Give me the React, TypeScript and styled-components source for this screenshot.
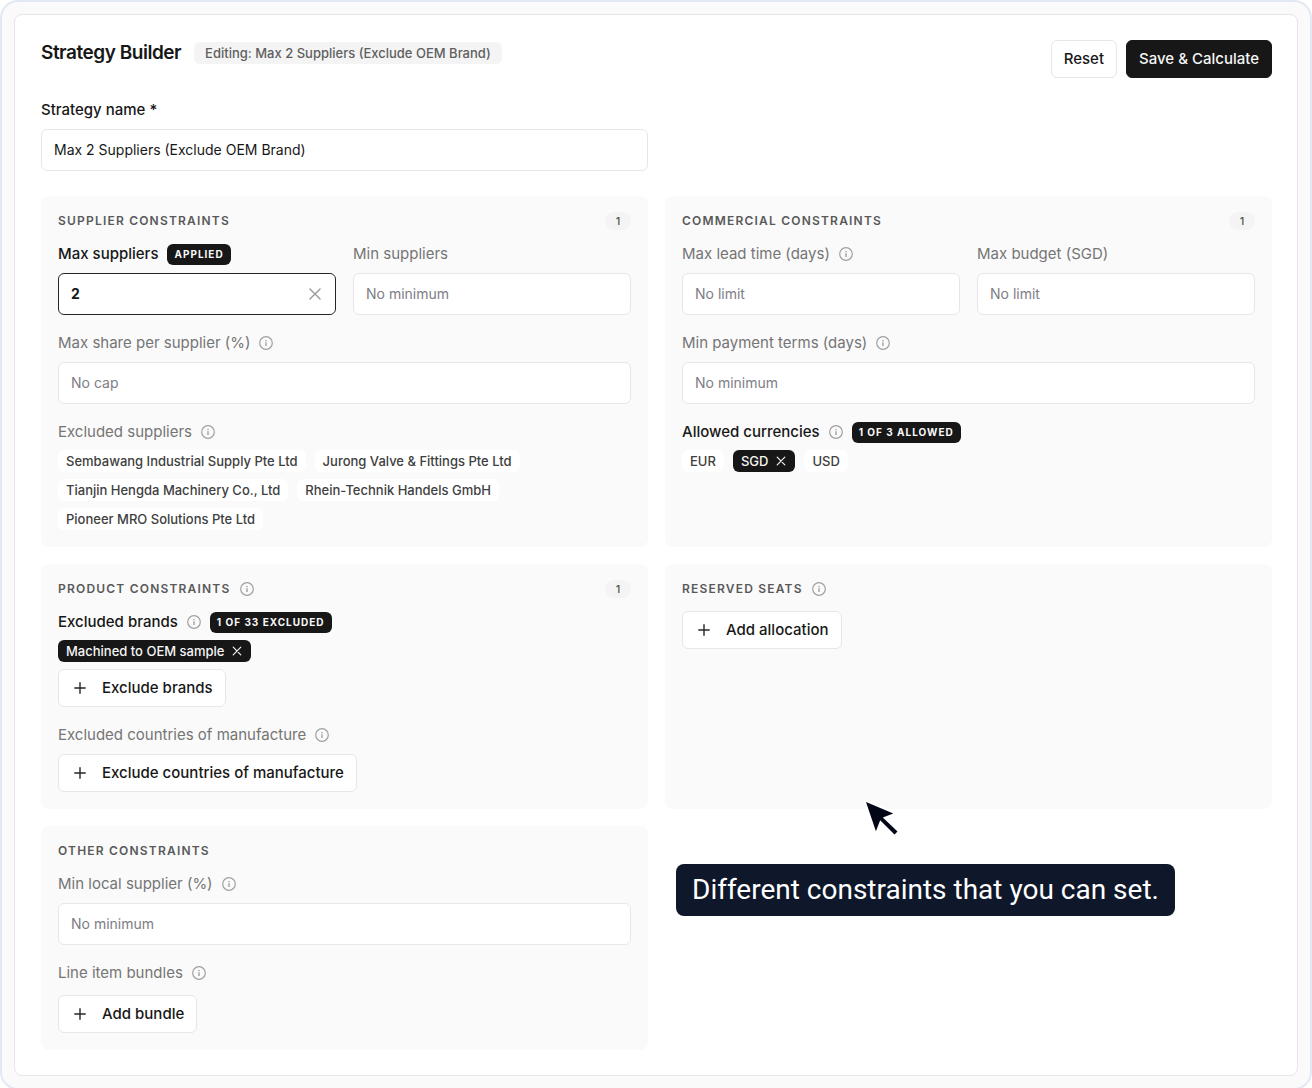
import React, { useState } from "react";
import styled, { createGlobalStyle, css } from "styled-components";

const color = {
  ink: "#171717",
  heading: "#595959",
  muted: "#757575",
  placeholder: "#7d7d85",
  line: "#e7e7e7",
  surface: "#fafafa",
  icon: "#a0a0a0",
};

const GlobalStyle = createGlobalStyle`
  *, *::before, *::after { box-sizing: border-box; }
  body {
    margin: 0;
    background: #ffffff;
    color: ${color.ink};
    font-family: Inter, "Liberation Sans", sans-serif;
    font-size: 15px;
    line-height: 22px;
  }
  button, input { font: inherit; color: inherit; }
`;

const Frame = styled.div`
  padding: 12px;
  border: 2px solid #e2e8f4;
  border-radius: 18px;
  background: ${color.surface};
`;

const Card = styled.main`
  padding: 25px 25px 25px 26px;
  border: 1px solid ${color.line};
  border-radius: 8px;
  background: #ffffff;
`;

const Header = styled.header`
  display: flex;
  justify-content: space-between;
  align-items: flex-start;
  margin-bottom: 21px;
`;

const TitleGroup = styled.div`
  display: flex;
  align-items: center;
  gap: 13px;
`;

const Title = styled.h1`
  margin: 0;
  font-size: 19px;
  line-height: 26px;
  font-weight: 600;
  letter-spacing: -0.025em;
`;

const EditingTag = styled.span`
  padding: 0 11px;
  border-radius: 6px;
  background: #f4f4f4;
  color: #5f5f5f;
  font-size: 13px;
  line-height: 22px;
  font-weight: 500;
`;

const Actions = styled.div`
  display: flex;
  gap: 9px;
`;

const Button = styled.button<{ $primary?: boolean }>`
  display: inline-flex;
  align-items: center;
  align-self: flex-start;
  gap: 13px;
  height: 38px;
  padding: 0 12px;
  border: 1px solid ${(p) => (p.$primary ? color.ink : color.line)};
  border-radius: 6px;
  background: ${(p) => (p.$primary ? color.ink : "#ffffff")};
  color: ${(p) => (p.$primary ? "#f5f5f5" : color.ink)};
  font-weight: 500;
  cursor: pointer;
`;

const Columns = styled.div`
  display: grid;
  grid-template-columns: 1fr 1fr;
  gap: 17px;
`;

const NameRow = styled(Columns)`
  margin-bottom: 25px;
`;

const Panel = styled.section`
  display: flex;
  flex-direction: column;
  gap: 13px;
  padding: 16px 17px 17px;
  border-radius: 8px;
  background: ${color.surface};
`;

const PanelHead = styled.div`
  display: flex;
  align-items: center;
  gap: 9px;
  height: 18px;
`;

const PanelTitle = styled.h2`
  margin: 0;
  color: ${color.heading};
  font-size: 12px;
  line-height: 18px;
  font-weight: 600;
  letter-spacing: 0.1em;
  text-transform: uppercase;
`;

const Count = styled.span`
  width: 26px;
  margin-left: auto;
  border-radius: 9px;
  background: #f4f4f4;
  color: #525252;
  font-size: 11px;
  line-height: 18px;
  font-weight: 500;
  text-align: center;
`;

const PanelBody = styled.div`
  display: flex;
  flex-direction: column;
  gap: 17px;
`;

const FieldBox = styled.div<{ $gap?: number }>`
  display: flex;
  flex-direction: column;
  gap: ${(p) => p.$gap ?? 8}px;
  min-width: 0;
`;

const LabelRow = styled.div`
  display: flex;
  align-items: center;
  gap: 9px;
  height: 22px;
`;

const labelText = css<{ $active?: boolean }>`
  color: ${(p) => (p.$active ? color.ink : color.muted)};
  font-weight: ${(p) => (p.$active ? 500 : 400)};
`;

const Label = styled.label<{ $active?: boolean }>`
  ${labelText}
`;

const GroupLabel = styled.span<{ $active?: boolean }>`
  ${labelText}
`;

const Badge = styled.span`
  padding: 0 7px;
  border-radius: 6px;
  background: ${color.ink};
  color: #fafafa;
  font-size: 10px;
  line-height: 21px;
  font-weight: 700;
  letter-spacing: 0.1em;
  text-transform: uppercase;
`;

const InputBox = styled.div<{ $active?: boolean }>`
  display: flex;
  align-items: center;
  height: 42px;
  padding: 0 12px;
  border: 1px solid ${(p) => (p.$active ? "#262626" : color.line)};
  border-radius: 6px;
  background: #ffffff;
  font-size: 14px;
  font-weight: ${(p) => (p.$active ? 700 : 400)};
`;

const Input = styled.input`
  flex: 1;
  min-width: 0;
  padding: 0;
  border: 0;
  outline: 0;
  background: transparent;
  &::placeholder { color: ${color.placeholder}; opacity: 1; }
`;

const ClearButton = styled.button`
  display: flex;
  padding: 0;
  border: 0;
  background: transparent;
  color: #999999;
  cursor: pointer;
`;

const Chips = styled.div`
  display: flex;
  flex-wrap: wrap;
  gap: 7px 9px;
`;

const Chip = styled.button<{ $on?: boolean }>`
  display: inline-flex;
  align-items: center;
  gap: 7px;
  height: 22px;
  padding: 0 8px;
  border: 0;
  border-radius: 6px;
  background: ${(p) => (p.$on ? color.ink : "#ffffff")};
  color: ${(p) => (p.$on ? "#f5f5f5" : "#404040")};
  font-size: 13px;
  line-height: 22px;
  font-weight: 500;
  cursor: pointer;
`;

const Annotation = styled.aside`
  position: relative;
  padding: 38px 11px;
`;

const Callout = styled.p`
  width: fit-content;
  margin: 0;
  padding: 0 16px;
  border-radius: 8px;
  background: #0f172a;
  color: #ffffff;
  font-family: Roboto, sans-serif;
  font-size: 28px;
  line-height: 52px;
`;

const Pointer = styled.svg`
  position: absolute;
  top: -28px;
  left: 197px;
`;

function InfoIcon() {
  return (
    <svg width="14" height="14" viewBox="0 0 14 14" fill="none" stroke={color.icon} aria-hidden="true">
      <circle cx="7" cy="7" r="6.3" strokeWidth="1.2" />
      <path d="M7 6.3v3.6" strokeWidth="1.4" />
      <path d="M7 3.9v1.3" strokeWidth="1.4" />
    </svg>
  );
}

function CrossIcon({ size, weight = 1 }: { size: number; weight?: number }) {
  return (
    <svg width={size} height={size} viewBox="0 0 12 12" fill="none" stroke="currentColor" strokeWidth={weight} strokeLinecap="round" aria-hidden="true">
      <path d="M2.2 2.2l7.6 7.6M9.8 2.2L2.2 9.8" />
    </svg>
  );
}

function PlusIcon() {
  return (
    <svg width="18" height="16" viewBox="0 0 18 16" fill="none" stroke="#262626" strokeWidth="1.4" strokeLinecap="round" aria-hidden="true">
      <path d="M9 2.8v10.4M3.8 8h10.4" />
    </svg>
  );
}

interface FieldProps {
  id: string;
  label: string;
  placeholder?: string;
  initial?: string;
  info?: boolean;
  clearable?: boolean;
}

function Field({ id, label, placeholder, initial = "", info, clearable }: FieldProps) {
  const [value, setValue] = useState(initial);
  const applied = Boolean(clearable && value);
  return (
    <FieldBox>
      <LabelRow>
        <Label htmlFor={id} $active={applied}>{label}</Label>
        {info && <InfoIcon />}
        {applied && <Badge>Applied</Badge>}
      </LabelRow>
      <InputBox $active={applied}>
        <Input id={id} value={value} placeholder={placeholder} onChange={(e) => setValue(e.target.value)} />
        {applied && (
          <ClearButton type="button" aria-label={"Clear " + label} onClick={() => setValue("")}>
            <CrossIcon size={16} />
          </ClearButton>
        )}
      </InputBox>
    </FieldBox>
  );
}

interface GroupProps {
  label: string;
  badge?: string;
  gap?: number;
  children: React.ReactNode;
}

function Group({ label, badge, gap = 7, children }: GroupProps) {
  return (
    <FieldBox $gap={gap} role="group" aria-label={label}>
      <LabelRow>
        <GroupLabel $active={Boolean(badge)}>{label}</GroupLabel>
        <InfoIcon />
        {badge && <Badge>{badge}</Badge>}
      </LabelRow>
      {children}
    </FieldBox>
  );
}

interface SectionProps {
  title: string;
  info?: boolean;
  count?: number;
  children: React.ReactNode;
}

function Section({ title, info, count, children }: SectionProps) {
  return (
    <Panel>
      <PanelHead>
        <PanelTitle>{title}</PanelTitle>
        {info && <InfoIcon />}
        {count !== undefined && <Count>{count}</Count>}
      </PanelHead>
      <PanelBody>{children}</PanelBody>
    </Panel>
  );
}

function AddButton({ children }: { children: React.ReactNode }) {
  return (
    <Button type="button">
      <PlusIcon />
      {children}
    </Button>
  );
}

function ChipList({ items, selected = [] }: { items: string[]; selected?: string[] }) {
  return (
    <Chips>
      {items.map((item) => {
        const on = selected.includes(item);
        return (
          <Chip key={item} type="button" $on={on} aria-pressed={on}>
            {item}
            {on && <CrossIcon size={12} weight={1.2} />}
          </Chip>
        );
      })}
    </Chips>
  );
}

const suppliers = [
  "Sembawang Industrial Supply Pte Ltd",
  "Jurong Valve & Fittings Pte Ltd",
  "Tianjin Hengda Machinery Co., Ltd",
  "Rhein-Technik Handels GmbH",
  "Pioneer MRO Solutions Pte Ltd",
];

export default function App() {
  const [name, setName] = useState("Max 2 Suppliers (Exclude OEM Brand)");
  return (
    <>
      <GlobalStyle />
      <Frame>
        <Card>
          <Header>
            <TitleGroup>
              <Title>Strategy Builder</Title>
              <EditingTag>Editing: Max 2 Suppliers (Exclude OEM Brand)</EditingTag>
            </TitleGroup>
            <Actions>
              <Button type="button">Reset</Button>
              <Button type="button" $primary>Save &amp; Calculate</Button>
            </Actions>
          </Header>

          <NameRow>
            <FieldBox>
              <LabelRow>
                <Label htmlFor="name" $active>Strategy name *</Label>
              </LabelRow>
              <InputBox>
                <Input id="name" value={name} onChange={(e) => setName(e.target.value)} />
              </InputBox>
            </FieldBox>
          </NameRow>

          <Columns>
            <Section title="Supplier constraints" count={1}>
              <Columns>
                <Field id="max-suppliers" label="Max suppliers" initial="2" clearable />
                <Field id="min-suppliers" label="Min suppliers" placeholder="No minimum" />
              </Columns>
              <Field id="max-share" label="Max share per supplier (%)" placeholder="No cap" info />
              <Group label="Excluded suppliers">
                <ChipList items={suppliers} />
              </Group>
            </Section>

            <Section title="Commercial constraints" count={1}>
              <Columns>
                <Field id="lead-time" label="Max lead time (days)" placeholder="No limit" info />
                <Field id="budget" label="Max budget (SGD)" placeholder="No limit" />
              </Columns>
              <Field id="payment-terms" label="Min payment terms (days)" placeholder="No minimum" info />
              <Group label="Allowed currencies" badge="1 of 3 allowed">
                <ChipList items={["EUR", "SGD", "USD"]} selected={["SGD"]} />
              </Group>
            </Section>

            <Section title="Product constraints" info count={1}>
              <Group label="Excluded brands" badge="1 of 33 excluded">
                <ChipList items={["Machined to OEM sample"]} selected={["Machined to OEM sample"]} />
                <AddButton>Exclude brands</AddButton>
              </Group>
              <Group label="Excluded countries of manufacture" gap={8}>
                <AddButton>Exclude countries of manufacture</AddButton>
              </Group>
            </Section>

            <Section title="Reserved seats" info>
              <AddButton>Add allocation</AddButton>
            </Section>

            <Section title="Other constraints">
              <Field id="local-supplier" label="Min local supplier (%)" placeholder="No minimum" info />
              <Group label="Line item bundles" gap={11}>
                <AddButton>Add bundle</AddButton>
              </Group>
            </Section>

            <Annotation>
              <Pointer width="40" height="40" viewBox="0 0 40 40" aria-hidden="true">
                <path d="M4 4L31.3 15.4L20.8 19.4L35.5 33.4L32.5 36.5L18.2 22.2L13.9 33.2Z" fill="#020617" stroke="#ffffff" strokeWidth="4" paintOrder="stroke" />
              </Pointer>
              <Callout>Different constraints that you can set.</Callout>
            </Annotation>
          </Columns>
        </Card>
      </Frame>
    </>
  );
}
